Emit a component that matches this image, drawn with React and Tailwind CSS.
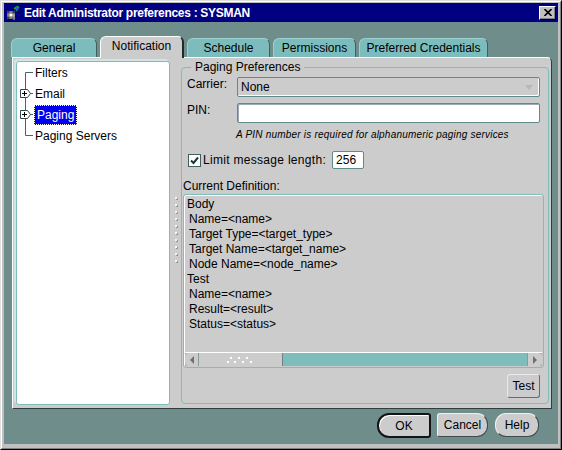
import React from "react";

function TitleIcon() {
  return (
    <svg width="16" height="16" viewBox="0 0 16 16">
      <circle cx="6" cy="10" r="4" fill="#808080" />
      <circle cx="6" cy="10" r="1.6" fill="#ffffff" />
      <path d="M2 6 L4 8 M10 6 L8 8 M2 14 L4 12 M10 14 L8 12" stroke="#404040" strokeWidth="1.5" />
      <path d="M9 4 L13 1 M11 5 L14 2 M10 2 L12 6" stroke="#00c000" strokeWidth="1.5" />
      <circle cx="12" cy="4" r="1.5" fill="#4040ff" />
      <path d="M9 9 L9 15" stroke="#c0c0c0" strokeWidth="1" />
    </svg>
  );
}

function Tab({ label, width, active }) {
  if (active) {
    return (
      <div
        className={`relative z-10 -mb-px h-[22px] ${width} flex items-center justify-center pb-[3px] bg-[#cccccc] rounded-t-[6px] border-t border-l border-white border-r-2 border-r-[#1f2a29]`}
      >
        {label}
      </div>
    );
  }
  return (
    <div
      className={`h-[19px] ${width} flex items-center justify-center pb-[1px] bg-[#7dbcbc] rounded-t-[6px] border-t border-l border-[#9fd0d0] border-r border-r-[#3f6060]`}
    >
      {label}
    </div>
  );
}

function TreeRow({ label, kind, expandable, selected }) {
  const top = kind === "first" ? 10.5 : 0;
  const bottom = kind === "last" ? 10.5 : 21;
  return (
    <div className="h-[21px] flex items-center">
      <svg width="16" height="21" viewBox="0 0 16 21" className="shrink-0">
        <path d={`M8.5 ${top} L8.5 ${bottom} M8.5 10.5 L16 10.5`} stroke="#446868" strokeWidth="1" />
        {expandable && (
          <g>
            <path d="M3.5 6.5 L10.5 6.5 L13.5 10.5 L10.5 14.5 L3.5 14.5 Z" fill="#ffffff" stroke="#2f4747" strokeWidth="1" />
            <path d="M5 10.5 L10 10.5 M7.5 8 L7.5 13" stroke="#000000" strokeWidth="1" />
          </g>
        )}
      </svg>
      {selected ? (
        <span className="ml-[1px] px-[2px] leading-[18px] bg-[#0000ee] text-white border border-dotted border-white">
          {label}
        </span>
      ) : (
        <span className="ml-[2px] leading-[18px]">{label}</span>
      )}
    </div>
  );
}

function Triangle({ dir }) {
  return (
    <svg width="6" height="8" viewBox="0 0 6 8">
      {dir === "left" ? (
        <path d="M5 0 L1 4 L5 8 Z" fill="#707070" />
      ) : (
        <path d="M1 0 L5 4 L1 8 Z" fill="#707070" />
      )}
    </svg>
  );
}

export default function App() {
  const dots = Array.from({ length: 10 });
  return (
    <div className="w-[562px] h-[450px] border border-[#dfdfdf] border-r-black border-b-black font-['Liberation_Sans',Arial,sans-serif] text-[12px] text-black">
      <div className="h-full flex flex-col bg-[#c0c0c0] border border-white border-r-[#808080] border-b-[#808080] pt-[1px] px-[2px] pb-[4px]">
        {/* title bar */}
        <div className="h-[19px] shrink-0 bg-[#000080] flex items-center pl-[1px] pr-[2px]">
          <TitleIcon />
          <span className="ml-[3px] text-white font-bold text-[12px] tracking-[-0.3px]">
            Edit Administrator preferences : SYSMAN
          </span>
          <div className="ml-auto w-[17px] h-[14px] bg-[#c0c0c0] border border-white border-r-black border-b-black shadow-[inset_-1px_-1px_0_#808080] flex items-center justify-center">
            <svg width="8" height="7" viewBox="0 0 8 7">
              <path d="M0.5 0 L7.5 7 M7.5 0 L0.5 7" stroke="#000" strokeWidth="1.6" />
            </svg>
          </div>
        </div>

        {/* body */}
        <div className="flex-1 bg-[#6f8e8b] flex flex-col pt-[14px] pl-[7px] pr-[6px] pb-[6px]">
          <div className="flex items-end gap-[3px] h-[21px]">
            <Tab label="General" width="w-[86px]" />
            <Tab label="Notification" width="w-[84px]" active />
            <Tab label="Schedule" width="w-[83px]" />
            <Tab label="Permissions" width="w-[83px]" />
            <Tab label="Preferred Credentials" width="w-[129px]" />
          </div>

          {/* tab panel */}
          <div className="ml-[1px] h-[352px] flex bg-[#cccccc] border border-white border-r-[#2f3d3c] border-b-[#2f3d3c] rounded-tr-[5px] pt-[3px] pl-[3px] pr-[2px] pb-[3px]">
            {/* tree */}
            <div className="w-[154px] shrink-0 bg-white border border-[#7fbcbc] rounded-[3px] shadow-[-2px_-2px_0_#cfe6e6]">
              <TreeRow label="Filters" kind="first" />
              <TreeRow label="Email" expandable />
              <TreeRow label="Paging" expandable selected />
              <TreeRow label="Paging Servers" kind="last" />
            </div>

            {/* splitter grip */}
            <div className="w-[11px] shrink-0 flex flex-col gap-[5px] pt-[136px] pl-[5px]">
              {dots.map((_, i) => (
                <span key={i} className="w-[2px] h-[2px] bg-[#f4f4f4] shadow-[1px_1px_0_#8a9a9a]" />
              ))}
            </div>

            {/* group box */}
            <fieldset className="flex-1 -mt-[1px] mb-[1px] border border-[#7fbcbc] rounded-[4px] min-w-0">
              <legend className="ml-[9px] px-[4px] leading-[14px]">Paging Preferences</legend>
              <div className="flex flex-col">
                <div className="mt-[3px] h-[20px] flex items-start pl-[5px]">
                  <span className="w-[50px] leading-[14px]">Carrier:</span>
                  <div className="w-[303px] h-[20px] bg-[#cccccc] border border-[#5e8a8a] rounded-[2px] shadow-[inset_-1px_-1px_0_#ffffff] flex items-center pl-[3px] pr-[6px]">
                    <span>None</span>
                    <svg width="8" height="5" viewBox="0 0 8 5" className="ml-auto">
                      <path d="M0 0 L8 0 L4 5 Z" fill="#b8b8b8" />
                    </svg>
                  </div>
                </div>

                <div className="mt-[6px] h-[19px] flex items-start pl-[5px]">
                  <span className="w-[50px] leading-[14px]">PIN:</span>
                  <div className="w-[303px] h-[20px] bg-white border border-[#5e8a8a] rounded-[2px] shadow-[inset_1px_1px_0_#9ab]" />
                </div>

                <div className="mt-[7px] pl-[54px] text-[10px] italic leading-[12px] tracking-[0.2px]">
                  A PIN number is required for alphanumeric paging services
                </div>

                <div className="mt-[10px] h-[18px] flex items-center pl-[6px]">
                  <span className="w-[13px] h-[13px] bg-white border border-[#3f5f5f] flex items-center justify-center">
                    <svg width="9" height="9" viewBox="0 0 9 9">
                      <path d="M1 4.5 L3.5 7 L8 1.5" stroke="#1f3535" strokeWidth="2" fill="none" />
                    </svg>
                  </span>
                  <span className="ml-[2px] tracking-[0.3px]">Limit message length:</span>
                  <div className="ml-[6px] w-[32px] h-[18px] bg-white border border-[#5e8a8a] rounded-[2px] flex items-center pl-[3px]">
                    256
                  </div>
                </div>

                <div className="mt-[10px] pl-[1px] leading-[14px]">Current Definition:</div>

                <div className="mt-[1px] ml-[1px] mr-[4px] h-[174px] flex flex-col border border-[#7fbcbc] rounded-[3px] shadow-[inset_1px_1px_0_#ffffff]">
                  <div className="flex-1 pt-[2px] pl-[3px] leading-[15px]">
                    <div>Body</div>
                    <div className="pl-[2px]">Name=&lt;name&gt;</div>
                    <div className="pl-[2px]">Target Type=&lt;target_type&gt;</div>
                    <div className="pl-[2px]">Target Name=&lt;target_name&gt;</div>
                    <div className="pl-[2px]">Node Name=&lt;node_name&gt;</div>
                    <div>Test</div>
                    <div className="pl-[2px]">Name=&lt;name&gt;</div>
                    <div className="pl-[2px]">Result=&lt;result&gt;</div>
                    <div className="pl-[2px]">Status=&lt;status&gt;</div>
                  </div>
                  <div className="h-[14px] mx-[1px] mb-[1px] flex bg-[#7fbcbc] border-t border-white">
                    <div className="w-[14px] bg-[#cccccc] border-r border-[#8a9a9a] rounded-l-[4px] flex items-center justify-center">
                      <Triangle dir="left" />
                    </div>
                    <div className="w-[84px] bg-[#cccccc] border-r border-[#6f8080] flex items-center justify-center">
                      <svg width="28" height="8" viewBox="0 0 28 8">
                        {[3, 11, 19].map((x) => (
                          <rect key={x} x={x} y="1" width="2" height="2" fill="#ffffff" />
                        ))}
                        {[0, 7, 15, 23].map((x) => (
                          <rect key={x} x={x} y="5" width="2" height="2" fill="#ffffff" />
                        ))}
                      </svg>
                    </div>
                    <div className="flex-1" />
                    <div className="w-[15px] bg-[#cccccc] border-l border-[#8a9a9a] rounded-r-[4px] flex items-center justify-center">
                      <Triangle dir="right" />
                    </div>
                  </div>
                </div>

                <div className="mt-[6px] mr-[8px] self-end w-[33px] h-[24px] bg-[#cccccc] border border-[#e8e8e8] border-r-[#5f6f6f] border-b-[#5f6f6f] rounded-[3px] flex items-center justify-center">
                  Test
                </div>
              </div>
            </fieldset>
          </div>

          {/* dialog buttons */}
          <div className="mt-[4px] h-[25px] flex justify-end pr-[13px] text-[12px]">
            <div className="w-[54px] h-[25px] bg-[#cccccc] border-2 border-[#141414] rounded-l-[12px] rounded-r-[3px] shadow-[inset_1px_1px_0_#ffffff] flex items-center justify-center">
              OK
            </div>
            <div className="ml-[6px] w-[51px] h-[24px] bg-[#cccccc] border border-[#f0f0f0] border-r-[#3f4a4a] border-b-[#3f4a4a] rounded-l-[3px] rounded-r-[11px] flex items-center justify-center">
              Cancel
            </div>
            <div className="ml-[7px] w-[44px] h-[24px] bg-[#cccccc] border border-[#f0f0f0] border-r-[#3f4a4a] border-b-[#3f4a4a] rounded-[11px] flex items-center justify-center">
              Help
            </div>
          </div>
        </div>
      </div>
    </div>
  );
}
